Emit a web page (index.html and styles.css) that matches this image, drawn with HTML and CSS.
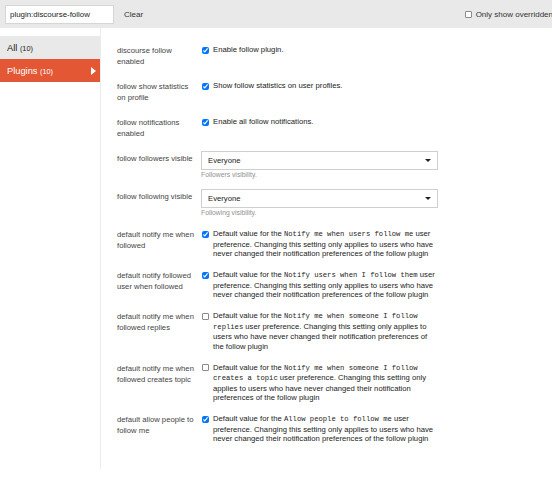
FILE: index.html
```html
<!DOCTYPE html>
<html lang="en">
<head>
    <meta charset="UTF-8">
    <meta name="viewport" content="width=device-width, initial-scale=1.0">
    <title>Plugin settings</title>
    <link rel="stylesheet" href="styles.css">
</head>
<body>
    <div class="page">
        <div class="admin-controls">
            <input class="filter" type="text" value="plugin:discourse-follow">
            <span class="clear">Clear</span>
            <label class="overridden"><input type="checkbox"> Only show overridden</label>
        </div>
        <div class="admin-body">
            <ul class="admin-nav">
                <li class="nav-all"><span>All <small>(10)</small></span></li>
                <li class="nav-active"><span>Plugins <small>(10)</small></span><i class="arrow"></i></li>
            </ul>
            <div class="admin-detail">
                <div class="setting">
                    <div class="setting-label">discourse follow enabled</div>
                    <div class="setting-value check"><input type="checkbox" checked><div class="desc">Enable follow plugin.</div></div>
                </div>
                <div class="setting">
                    <div class="setting-label">follow show statistics on profile</div>
                    <div class="setting-value check"><input type="checkbox" checked><div class="desc">Show follow statistics on user profiles.</div></div>
                </div>
                <div class="setting">
                    <div class="setting-label">follow notifications enabled</div>
                    <div class="setting-value check"><input type="checkbox" checked><div class="desc">Enable all follow notifications.</div></div>
                </div>
                <div class="setting">
                    <div class="setting-label">follow followers visible</div>
                    <div class="setting-value">
                        <div class="select-box">Everyone</div>
                        <div class="help">Followers visibility.</div>
                    </div>
                </div>
                <div class="setting">
                    <div class="setting-label">follow following visible</div>
                    <div class="setting-value">
                        <div class="select-box">Everyone</div>
                        <div class="help">Following visibility.</div>
                    </div>
                </div>
                <div class="setting">
                    <div class="setting-label">default notify me when followed</div>
                    <div class="setting-value check"><input type="checkbox" checked><div class="desc">Default value for the <code>Notify me when users follow me</code> user preference. Changing this setting only applies to users who have never changed their notification preferences of the follow plugin</div></div>
                </div>
                <div class="setting">
                    <div class="setting-label">default notify followed user when followed</div>
                    <div class="setting-value check"><input type="checkbox" checked><div class="desc">Default value for the <code>Notify users when I follow them</code> user preference. Changing this setting only applies to users who have never changed their notification preferences of the follow plugin</div></div>
                </div>
                <div class="setting">
                    <div class="setting-label">default notify me when followed replies</div>
                    <div class="setting-value check"><input type="checkbox"><div class="desc">Default value for the <code>Notify me when someone I follow replies</code> user preference. Changing this setting only applies to users who have never changed their notification preferences of the follow plugin</div></div>
                </div>
                <div class="setting">
                    <div class="setting-label">default notify me when followed creates topic</div>
                    <div class="setting-value check"><input type="checkbox"><div class="desc">Default value for the <code>Notify me when someone I follow creates a topic</code> user preference. Changing this setting only applies to users who have never changed their notification preferences of the follow plugin</div></div>
                </div>
                <div class="setting">
                    <div class="setting-label">default allow people to follow me</div>
                    <div class="setting-value check"><input type="checkbox" checked><div class="desc">Default value for the <code>Allow people to follow me</code> user preference. Changing this setting only applies to users who have never changed their notification preferences of the follow plugin</div></div>
                </div>
            </div>
        </div>
    </div>
</body>
</html>
```

FILE: styles.css
```css
body,html{
    margin: 0;
    background: #fff;
    overflow: hidden;
}
.page{
    width: 562px;
    font-family: "Liberation Sans", Arial, sans-serif;
    font-size: 7.7px;
    color: #222;
}
input[type="checkbox"]{
    width: 7px;
    height: 7px;
    margin: 0;
    flex-shrink: 0;
}
input[type="checkbox"]:not(:checked){
    appearance: none;
    box-sizing: border-box;
    border: 1px solid #8a8a8a;
    border-radius: 1px;
    background: #fff;
}
.admin-controls{
    height: 28px;
    background: #e9e9e9;
    display: flex;
    align-items: center;
    padding: 0 5px;
}
.filter{
    width: 109px;
    height: 19px;
    box-sizing: border-box;
    border: 1px solid #d6d6d6;
    padding: 0 4px;
    margin: 0;
    font-family: inherit;
    font-size: 7.9px;
    color: #222;
    outline: none;
}
.clear{
    margin-left: 10px;
    color: #333;
    font-size: 8px;
}
.overridden{
    margin-left: auto;
    display: flex;
    align-items: center;
    gap: 4px;
    white-space: nowrap;
    color: #333;
    font-size: 8px;
    padding-right: 4px;
}
.admin-body{
    display: flex;
    align-items: flex-start;
}
.admin-nav{
    list-style: none;
    margin: 8px 0 0;
    padding: 0;
    width: 100px;
    flex-shrink: 0;
}
.admin-nav li{
    height: 23px;
    display: flex;
    align-items: center;
    justify-content: space-between;
    padding: 0 4px 0 7px;
    font-size: 9.3px;
}
.admin-nav small{
    font-size: 7.3px;
}
.nav-all{
    background: #e9e9e9;
    color: #222;
}
.nav-active{
    background: #e45735;
    color: #fff;
}
.arrow{
    width: 0;
    height: 0;
    border-left: 5px solid #fff;
    border-top: 4.5px solid transparent;
    border-bottom: 4.5px solid transparent;
}
.admin-detail{
    border-left: 1px solid #ececec;
    padding: 17px 0 14px 16px;
}
.setting{
    display: grid;
    grid-template-columns: 81px 237px;
    column-gap: 4px;
    padding-bottom: 11.5px;
}
.setting-label{
    color: #444;
    line-height: 11px;
    padding-bottom: 2.5px;
}
.setting-value.check{
    display: flex;
    align-items: flex-start;
    gap: 4px;
}
.setting-value.check input{
    margin-top: 1.5px;
}
.desc{
    flex: 1;
    line-height: 9.5px;
}
.desc code{
    font-family: "Liberation Mono", "Courier New", monospace;
    font-size: 7.2px;
}
.select-box{
    height: 19px;
    box-sizing: border-box;
    border: 1px solid #cfcfcf;
    margin-left: -1px;
    margin-top: -2px;
    width: 237px;
    display: flex;
    align-items: center;
    justify-content: space-between;
    padding: 0 6px;
}
.select-box::after{
    content: "";
    width: 0;
    height: 0;
    border-top: 3px solid #222;
    border-left: 3px solid transparent;
    border-right: 3px solid transparent;
}
.help{
    font-size: 6.8px;
    color: #919191;
    margin-top: 1px;
    line-height: 8.5px;
    margin-left: -1px;
}
```
